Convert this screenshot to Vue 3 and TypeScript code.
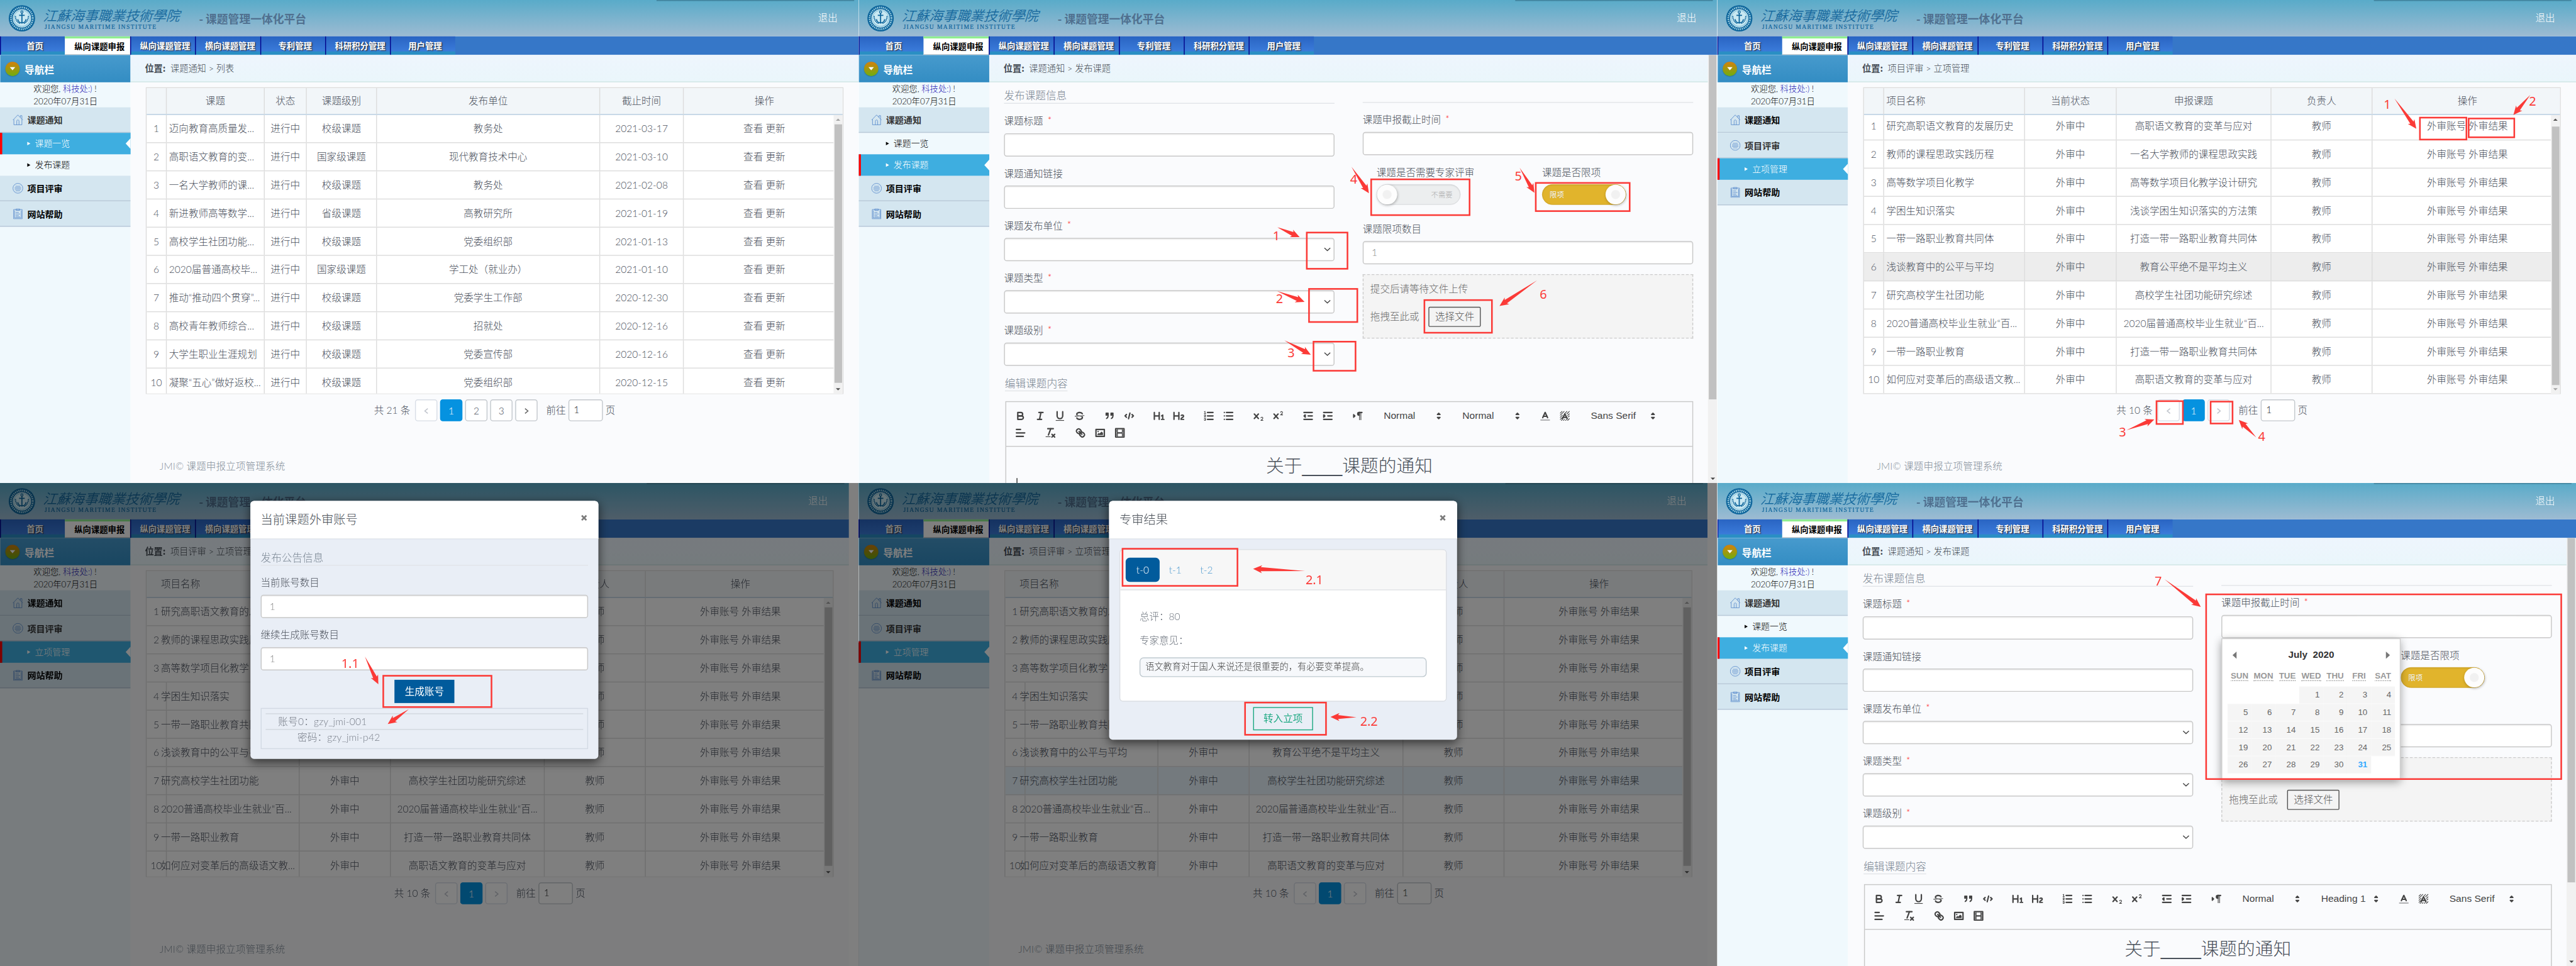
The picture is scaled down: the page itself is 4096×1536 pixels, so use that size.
<script setup lang="ts">
interface Column { title: string; width: number; left?: boolean }
interface Box { x: number; y: number; w: number; h: number }
interface Arrow { x1: number; y1: number; x2: number; y2: number }
interface Note { text: string; x: number; y: number }
interface Screen {
  id: string
  kind: 'list' | 'form'
  group: 'notice' | 'review'
  item: number
  crumbs: string
  modal?: 'account' | 'result'
  calendar?: boolean
  caret?: boolean
  heading?: string
  columns?: Column[]
  rows?: string[][]
  highlight?: number
  scrolled?: boolean
  tight?: boolean
  total?: number
  pages?: number
  boxes: Box[]
  arrows: Arrow[]
  notes: Note[]
}

const tabs = ['首页', '纵向课题申报', '纵向课题管理', '横向课题管理', '专利管理', '科研积分管理', '用户管理']

const noticeCols: Column[] = [
  { title: '', width: 45 },
  { title: '课题', width: 219, left: true },
  { title: '状态', width: 94 },
  { title: '课题级别', width: 157 },
  { title: '发布单位', width: 499 },
  { title: '截止时间', width: 187 },
  { title: '操作', width: 0 },
]
const noticeRows: string[][] = [
  ['迈向教育高质量发...', '进行中', '校级课题', '教务处', '2021-03-17'],
  ['高职语文教育的变...', '进行中', '国家级课题', '现代教育技术中心', '2021-03-10'],
  ['一名大学教师的课...', '进行中', '校级课题', '教务处', '2021-02-08'],
  ['新进教师高等数学...', '进行中', '省级课题', '高教研究所', '2021-01-19'],
  ['高校学生社团功能...', '进行中', '校级课题', '党委组织部', '2021-01-13'],
  ['2020届普通高校毕...', '进行中', '国家级课题', '学工处（就业办）', '2021-01-10'],
  ['推动“推动四个贯穿”...', '进行中', '校级课题', '党委学生工作部', '2020-12-30'],
  ['高校青年教师综合...', '进行中', '校级课题', '招就处', '2020-12-16'],
  ['大学生职业生涯规划', '进行中', '校级课题', '党委宣传部', '2020-12-16'],
  ['凝聚“五心”做好返校...', '进行中', '校级课题', '党委组织部', '2020-12-15'],
].map((r, i) => [String(i + 1), ...r, '查看 更新'])

function reviewCols(b: number, c: number, d: number, e: number): Column[] {
  return [
    { title: '', width: 45 },
    { title: '项目名称', width: b, left: true },
    { title: '当前状态', width: c },
    { title: '申报课题', width: d },
    { title: '负责人', width: e },
    { title: '操作', width: 0 },
  ]
}
const reviewPairs: [string, string][] = [
  ['研究高职语文教育的发展历史', '高职语文教育的变革与应对'],
  ['教师的课程思政实践历程', '一名大学教师的课程思政实践'],
  ['高等数学项目化教学', '高等数学项目化教学设计研究'],
  ['学困生知识落实', '浅谈学困生知识落实的方法策'],
  ['一带一路职业教育共同体', '打造一带一路职业教育共同体'],
  ['浅谈教育中的公平与平均', '教育公平绝不是平均主义'],
  ['研究高校学生社团功能', '高校学生社团功能研究综述'],
  ['2020普通高校毕业生就业“百...', '2020届普通高校毕业生就业“百...'],
  ['一带一路职业教育', '打造一带一路职业教育共同体'],
  ['如何应对变革后的高级语文教...', '高职语文教育的变革与应对'],
]
function reviewRows(last?: string): string[][] {
  return reviewPairs.map(([a, b], i) => [
    String(i + 1), last && i === 9 ? last : a, '外审中', b, '教师', '外审账号 外审结果',
  ])
}

const screens: Screen[] = [
  {
    id: 'notice-list', kind: 'list', group: 'notice', item: 0, crumbs: '课题通知 > 列表',
    columns: noticeCols, rows: noticeRows, total: 21, pages: 3, boxes: [], arrows: [], notes: [],
  },
  {
    id: 'notice-form', kind: 'form', group: 'notice', item: 1, crumbs: '课题通知 > 发布课题', heading: 'Normal', caret: true,
    boxes: [
      { x: 1002, y: 520, w: 91, h: 81 }, { x: 1007, y: 646, w: 108, h: 74 }, { x: 1017, y: 764, w: 94, h: 65 },
      { x: 1146, y: 401, w: 220, h: 80 }, { x: 1514, y: 409, w: 210, h: 63 }, { x: 1265, y: 671, w: 151, h: 73 },
    ],
    arrows: [
      { x1: 936, y1: 508, x2: 986, y2: 530 }, { x1: 936, y1: 651, x2: 997, y2: 675 }, { x1: 952, y1: 761, x2: 1011, y2: 793 },
      { x1: 1102, y1: 373, x2: 1141, y2: 432 }, { x1: 1478, y1: 375, x2: 1511, y2: 431 }, { x1: 1517, y1: 627, x2: 1433, y2: 684 },
    ],
    notes: [
      { text: '1', x: 934, y: 527 }, { text: '2', x: 941, y: 668 }, { text: '3', x: 967, y: 789 },
      { text: '4', x: 1107, y: 400 }, { text: '5', x: 1475, y: 393 }, { text: '6', x: 1531, y: 658 },
    ],
  },
  {
    id: 'review-list', kind: 'list', group: 'review', item: 0, crumbs: '项目评审 > 立项管理',
    columns: reviewCols(315, 205, 346, 226), rows: reviewRows(), highlight: 5, scrolled: true, total: 10, pages: 1,
    boxes: [
      { x: 1571, y: 263, w: 104, h: 49 }, { x: 1680, y: 265, w: 102, h: 42 },
      { x: 982, y: 897, w: 59, h: 51 }, { x: 1103, y: 898, w: 49, h: 49 },
    ],
    arrows: [
      { x1: 1514, y1: 220, x2: 1563, y2: 288 }, { x1: 1818, y1: 212, x2: 1780, y2: 257 },
      { x1: 915, y1: 962, x2: 977, y2: 938 }, { x1: 1205, y1: 978, x2: 1166, y2: 939 },
    ],
    notes: [
      { text: '1', x: 1498, y: 233 }, { text: '2', x: 1823, y: 226 },
      { text: '3', x: 906, y: 966 }, { text: '4', x: 1217, y: 976 },
    ],
  },
  {
    id: 'review-account', kind: 'list', group: 'review', item: 0, crumbs: '项目评审 > 立项管理', modal: 'account',
    columns: reviewCols(297, 204, 344, 226), rows: reviewRows(), tight: true, total: 10, pages: 1,
    boxes: [{ x: 857, y: 431, w: 242, h: 70 }],
    arrows: [{ x1: 816, y1: 388, x2: 846, y2: 450 }, { x1: 914, y1: 506, x2: 867, y2: 539 }],
    notes: [{ text: '1.1', x: 783, y: 403 }],
  },
  {
    id: 'review-result', kind: 'list', group: 'review', item: 0, crumbs: '项目评审 > 立项管理', modal: 'result',
    columns: reviewCols(297, 204, 344, 226), rows: reviewRows('如何应对变革后的高级语文教育'), highlight: 6, tight: true, total: 10, pages: 1,
    boxes: [{ x: 590, y: 147, w: 257, h: 83 }, { x: 864, y: 491, w: 181, h: 72 }],
    arrows: [{ x1: 998, y1: 197, x2: 882, y2: 192 }, { x1: 1113, y1: 524, x2: 1055, y2: 523 }],
    notes: [{ text: '2.1', x: 1019, y: 216 }, { text: '2.2', x: 1141, y: 533 }],
  },
  {
    id: 'notice-calendar', kind: 'form', group: 'notice', item: 1, crumbs: '课题通知 > 发布课题', heading: 'Heading 1', calendar: true,
    boxes: [{ x: 1093, y: 249, w: 794, h: 413 }],
    arrows: [{ x1: 1000, y1: 215, x2: 1081, y2: 277 }],
    notes: [{ text: '7', x: 986, y: 219 }],
  },
]

/** Cells that lie wholly behind an open dialog are not painted. */
function behindModal(s: Screen, row: number, col: number): boolean {
  if (!s.modal || (col !== 2 && col !== 3)) return false
  return row < (s.modal === 'account' ? 6 : 5)
}

const menu = [
  { key: 'notice', title: '课题通知', items: ['课题一览', '发布课题'] },
  { key: 'review', title: '项目评审', items: ['立项管理'] },
  { key: 'help', title: '网站帮助', items: [] as string[] },
]

const fields = [
  { label: '课题标题', required: true, select: false },
  { label: '课题通知链接', required: false, select: false },
  { label: '课题发布单位', required: true, select: true },
  { label: '课题类型', required: true, select: true },
  { label: '课题级别', required: true, select: true },
]

/** Arrow with a needle-thin tail that widens up to a triangular head. */
function arrowPoints(a: Arrow): string {
  const len = Math.hypot(a.x2 - a.x1, a.y2 - a.y1)
  const ux = (a.x2 - a.x1) / len
  const uy = (a.y2 - a.y1) / len
  const head = 20
  const at = (back: number, side: number) =>
    `${(a.x2 - ux * back - uy * side).toFixed(1)},${(a.y2 - uy * back + ux * side).toFixed(1)}`
  return [`${a.x1},${a.y1}`, at(head - 3, 4.5), at(head, 9), `${a.x2},${a.y2}`, at(head, -9), at(head - 3, -4.5)].join(' ')
}

const ln = (x1: number, y1: number, x2: number, y2: number, c = 'qs') =>
  `<line class="${c}" x1="${x1}" y1="${y1}" x2="${x2}" y2="${y2}"/>`
const ps = (d: string, c = 'qs') => `<path class="${c}" d="${d}"/>`
const rc = (x: number, y: number, w: number, h: number, c = 'qf') =>
  `<rect class="${c}" x="${x}" y="${y}" width="${w}" height="${h}"/>`

const icons: Record<string, string> = {
  bold: ps('M5,4H9.5A2.5,2.5,0,0,1,12,6.5v0A2.5,2.5,0,0,1,9.5,9H5V4Z') + ps('M5,9h5.5A2.5,2.5,0,0,1,13,11.5v0A2.5,2.5,0,0,1,10.5,14H5V9Z'),
  italic: ln(7, 4, 13, 4) + ln(5, 14, 11, 14) + ln(8, 14, 10, 4),
  underline: ps('M5,3V9a4.012,4.012,0,0,0,4,4H9a4.012,4.012,0,0,0,4-4V3') + rc(3, 15, 12, 1),
  strike: ln(15.5, 8.5, 2.5, 9.5, 'qs qt')
    + ps('M9.007,8C6.542,7.791,6,7.519,6,6.5,6,5.792,7.283,5,9,5c1.571,0,2.765.679,2.969,1.309a1,1,0,0,0,1.9-.617C13.356,4.106,11.354,3,9,3,6.2,3,4,4.538,4,6.5a3.2,3.2,0,0,0,.5,1.843Z', 'qf')
    + ps('M8.984,10C11.457,10.208,12,10.479,12,11.5c0,0.708-1.283,1.5-3,1.5-1.571,0-2.765-.679-2.969-1.309a1,1,0,1,0-1.9.617C4.644,13.894,6.646,15,9,15c2.8,0,5-1.538,5-3.5a3.2,3.2,0,0,0-.5-1.843Z', 'qf'),
  quote: rc(4, 5, 3, 3, 'qf qs2') + rc(11, 5, 3, 3, 'qf qs2') + ps('M7,8c0,4.031-3,5-3,5', 'qf qs2') + ps('M14,8c0,4.031-3,5-3,5', 'qf qs2'),
  code: '<polyline class="qs" points="5 7 3 9 5 11"/><polyline class="qs" points="13 7 15 9 13 11"/>' + ln(10, 5, 8, 13),
  h1: ps('M10,4V14a1,1,0,0,1-2,0V10H3v4a1,1,0,0,1-2,0V4A1,1,0,0,1,3,4V8H8V4a1,1,0,0,1,2,0Zm6.06787,9.209H14.98975V7.59863a.54085.54085,0,0,0-.605-.60547h-.62744a1.01119,1.01119,0,0,0-.748.29688L11.645,8.56641a.5435.5435,0,0,0-.022.8584l.28613.30762a.53861.53861,0,0,0,.84717.0332l.09912-.08789a1.2137,1.2137,0,0,0,.2417-.35254h.02246s-.01123.30859-.01123.60547V13.209H12.041a.54085.54085,0,0,0-.605.60547v.43945a.54085.54085,0,0,0,.605.60547h4.02686a.54085.54085,0,0,0,.605-.60547v-.43945A.54085.54085,0,0,0,16.06787,13.209Z', 'qf'),
  h2: ps('M16.73975,13.81445v.43945a.54085.54085,0,0,1-.605.60547H11.855a.58392.58392,0,0,1-.64893-.60547V14.0127c0-2.90527,3.39941-3.42187,3.39941-4.55469a.77675.77675,0,0,0-.84717-.78125,1.17684,1.17684,0,0,0-.83594.38477c-.2749.26367-.561.374-.85791.13184l-.4292-.34082c-.30811-.24219-.38525-.51758-.1543-.81445a2.97155,2.97155,0,0,1,2.45361-1.17676,2.45393,2.45393,0,0,1,2.68408,2.40918c0,2.45312-3.1792,2.92676-3.27832,3.93848h2.79443A.54085.54085,0,0,1,16.73975,13.81445ZM9,3A.99974.99974,0,0,0,8,4V8H3V4A1,1,0,0,0,1,4V14a1,1,0,0,0,2,0V10H8v4a1,1,0,0,0,2,0V4A.99974.99974,0,0,0,9,3Z', 'qf'),
  ol: ln(7, 4, 15, 4) + ln(7, 9, 15, 9) + ln(7, 14, 15, 14) + ln(2.5, 5.5, 4.5, 5.5, 'qs qt')
    + ps('M3.5,6A0.5,0.5,0,0,1,3,5.5V3.085l-0.276.138A0.5,0.5,0,0,1,2.053,3c-0.124-.247-0.023-0.324.224-0.447l1-.5A0.5,0.5,0,0,1,4,2.5v3A0.5,0.5,0,0,1,3.5,6Z', 'qf')
    + ps('M4.5,10.5h-2c0-.234,1.85-1.076,1.85-2.234A0.959,0.959,0,0,0,2.5,8.156', 'qs qt')
    + ps('M2.5,14.846a0.959,0.959,0,0,0,1.85-.109A0.7,0.7,0,0,0,3.75,14a0.688,0.688,0,0,0,.6-0.736,0.959,0.959,0,0,0-1.85-.109', 'qs qt'),
  ul: ln(6, 4, 15, 4) + ln(6, 9, 15, 9) + ln(6, 14, 15, 14) + ln(3, 4, 3, 4) + ln(3, 9, 3, 9) + ln(3, 14, 3, 14),
  sub: ps('M15.5,15H13.861a3.858,3.858,0,0,0,1.914-2.975,1.8,1.8,0,0,0-1.6-1.751A1.921,1.921,0,0,0,12.021,11.7a0.50013,0.50013,0,1,0,.957.291h0a0.914,0.914,0,0,1,1.053-.725,0.81,0.81,0,0,1,.744.762c0,1.076-1.16971,1.86982-1.93971,2.43082A1.45639,1.45639,0,0,0,12,15.5a0.5,0.5,0,0,0,.5.5h3A0.5,0.5,0,0,0,15.5,15Z', 'qf') + '<path class="qx" d="M3 6.3 8.9 12.7M8.9 6.3 3 12.7"/>',
  sup: ps('M15.5,7H13.861a4.015,4.015,0,0,0,1.914-2.975,1.8,1.8,0,0,0-1.6-1.751A1.922,1.922,0,0,0,12.021,3.7a0.5,0.5,0,1,0,.957.291,0.917,0.917,0,0,1,1.053-.725,0.81,0.81,0,0,1,.744.762c0,1.077-1.164,1.925-1.934,2.486A1.423,1.423,0,0,0,12,7.5a0.5,0.5,0,0,0,.5.5h3A0.5,0.5,0,0,0,15.5,7Z', 'qf') + '<path class="qx" d="M3 6.3 8.9 12.7M8.9 6.3 3 12.7"/>',
  outdent: ln(3, 14, 15, 14) + ln(3, 4, 15, 4) + ln(9, 9, 15, 9) + '<polyline class="qf qs2" points="5 7 5 11 3 9 5 7"/>',
  indent: ln(3, 14, 15, 14) + ln(3, 4, 15, 4) + ln(9, 9, 15, 9) + '<polyline class="qf qs2" points="3 7 3 11 5 9 3 7"/>',
  dir: '<polygon class="qf qs2" points="3 11 5 9 3 7 3 11"/>' + ln(15, 4, 11, 4) + ps('M11,3a3,3,0,0,0,0,6h1V3H11Z', 'qf') + rc(11, 4, 1, 11) + rc(13, 4, 1, 11),
  color: '<line class="qs ql" x1="3" y1="15" x2="15" y2="15"/><polyline class="qs" points="5.5 11.5 9 4 12.5 11.5"/>' + ln(11.6, 9.6, 6.4, 9.6),
  bg: '<path class="qs qt" d="M2.5 5 5 2.5M2.5 8 8 2.5M2.5 11 5.5 8M12 2.5 9.5 5M2.5 14 5 11.5M15.5 2.5 12 6M4 15.500 6 13.500M15.500 6 13 8.500M7 15.500 8.500 14M15.500 9 14 10.500M10 15.500 11.500 14M13 15.500 15.500 13"/><polyline class="qs" points="5.5 13 9 6 12.5 13"/>' + ln(11.6, 11, 6.4, 11),
  align: ln(3, 9, 15, 9) + ln(3, 14, 13, 14) + ln(3, 4, 9, 4),
  clean: ln(5, 3, 13, 3) + ln(6, 12, 9.35, 3) + ln(11, 11, 15, 15) + ln(15, 11, 11, 15) + rc(2, 14, 7, 1),
  link: ln(7, 7, 11, 11) + ps('M8.9,4.577a3.476,3.476,0,0,1,.36,4.679A3.476,3.476,0,0,1,4.577,8.9C3.185,7.5,2.035,6.4,4.217,4.217S7.5,3.185,8.9,4.577Z')
    + ps('M13.423,9.1a3.476,3.476,0,0,0-4.679-.36,3.476,3.476,0,0,0,.36,4.679c1.392,1.392,2.5,2.542,4.679.36S14.815,10.5,13.423,9.1Z'),
  image: rc(3, 4, 12, 10, 'qs') + '<circle class="qf" cx="6" cy="7" r="1"/><polyline class="qf" points="5 12 5 11 7 9 8 10 11 7 13 9 13 12 5 12"/>',
  video: rc(3, 3, 12, 12, 'qs') + rc(5, 3, 1, 12) + rc(12, 3, 1, 12) + rc(5, 8, 8, 2) + rc(3, 5, 3, 1) + rc(3, 7, 3, 1) + rc(3, 10, 3, 1)
    + rc(3, 12, 3, 1) + rc(12, 5, 3, 1) + rc(12, 7, 3, 1) + rc(12, 10, 3, 1) + rc(12, 12, 3, 1),
  pick: '<polygon class="qf qs2" points="7 11 9 13 11 11 7 11"/><polygon class="qf qs2" points="7 7 9 5 11 7 7 7"/>',
}

const groupsA = [['bold', 'italic', 'underline', 'strike'], ['quote', 'code'], ['h1', 'h2'], ['ol', 'ul'], ['sub', 'sup'], ['outdent', 'indent'], ['dir']]
const groupsB = [['align'], ['clean'], ['link', 'image', 'video']]

const weekdays = ['SUN', 'MON', 'TUE', 'WED', 'THU', 'FRI', 'SAT']
const weeks: (number | null)[][] = Array.from({ length: 5 }, (_, w) =>
  Array.from({ length: 7 }, (_, d) => {
    const n = w * 7 + d - 2
    return n >= 1 && n <= 31 ? n : null
  }))
</script>

<template>
  <div class="viewport">
    <div class="board">
      <section v-for="s in screens" :key="s.id" class="screen">
        <div class="page" :class="{ narrow: s.modal }">
          <header class="top">
            <svg class="emblem" viewBox="0 0 58 58">
              <circle cx="29" cy="29" r="28.500" fill="#0c649b" />
              <circle cx="29" cy="29" r="23.500" fill="none" stroke="#9fd0e2" stroke-width="4" stroke-dasharray="2.200 1.900" />
              <circle cx="29" cy="29" r="19" fill="#8cc6dc" stroke="#d5edf5" stroke-width="1.500" />
              <circle cx="29" cy="29" r="16.500" fill="#c9e8f2" />
              <path d="M15 24c0 8 4 14 10 16M43 24c0 8-4 14-10 16" fill="none" stroke="#0c649b" stroke-width="2.500" stroke-dasharray="2.500 1" />
              <path d="M29 18v21M23 22.500h12M20 31c1 5 5 8 9 8s8-3 9-8" fill="none" stroke="#0c649b" stroke-width="2.400" />
              <circle cx="29" cy="15.500" r="2.400" fill="none" stroke="#0c649b" stroke-width="1.700" />
            </svg>
            <div class="school">
              <span class="school-cn">江蘇海事職業技術學院</span>
              <span class="school-en">JIANGSU MARITIME INSTITUTE</span>
            </div>
            <h1 class="platform">- 课题管理一体化平台</h1>
            <a class="logout">退出</a>
            <i class="top-shade"></i>
          </header>
          <nav class="tabs">
            <a v-for="(t, i) in tabs" :key="t" class="tab" :class="{ on: i === 1, behind: s.modal && i > 3 }"><span>{{ t }}</span></a>
          </nav>
          <div class="body">
            <aside class="side">
              <div class="side-head">
                <span class="badge"><i></i></span><b>导航栏</b>
              </div>
              <div class="hello">
                <p>欢迎您, <a>科技处:)</a>&nbsp;!</p>
                <p class="date">2020年07月31日</p>
              </div>
              <template v-for="m in menu" :key="m.key">
                <div class="group" :class="{ open: m.key === s.group }">
                  <svg viewBox="0 0 24 24" class="gicon">
                    <g v-if="m.key === 'notice'">
                      <path d="M1 12.500 12 1l11 11.500M3 11v12h18V11M9.500 23v-8.500c0-3 5-3 5 0V23" /><path d="M17.500 6.500V2.500h3.500v7.500" />
                    </g>
                    <g v-else-if="m.key === 'review'">
                      <circle cx="12" cy="12" r="11" /><path d="M6.500 7.500h11M5 11h14M5 14h14M7 17.500h10" />
                    </g>
                    <g v-else>
                      <path d="M2.500 2.500h19v21h-19zM4.500 4.500v17h15v-17" /><path d="M8 1h8v3.500H8zM7 9h7M7 12.500h10M7 16h7M7 19h10" />
                    </g>
                  </svg>
                  {{ m.title }}
                </div>
                <template v-if="m.key === s.group">
                  <div v-for="(it, k) in m.items" :key="it" class="item" :class="{ on: k === s.item }">
                    <i class="tri"></i>{{ it }}
                  </div>
                </template>
              </template>
            </aside>

            <main class="main">
              <div class="crumbs"><b>位置:</b><span>{{ s.crumbs }}</span></div>

              <template v-if="s.kind === 'list'">
                <div class="table" :class="{ tight: s.tight, scrolled: s.scrolled }">
                  <div class="thead">
                    <div v-for="(c, i) in s.columns" :key="i" class="cell" :class="{ last: !c.width, left: c.left && s.group === 'review', behind: behindModal(s, -1, i) }" :style="c.width ? { width: c.width + 'px' } : {}">
                      <span>{{ c.title }}</span>
                    </div>
                  </div>
                  <div class="tbody">
                    <div class="rows">
                      <div v-for="(r, ri) in s.rows" :key="ri" class="row" :class="{ hot: ri === s.highlight, merged: s.tight && ri < 3, blue: s.tight }">
                        <div v-for="(v, i) in r" :key="i" class="cell" :class="{ last: !s.columns![i].width, left: s.columns![i].left, behind: behindModal(s, ri, i) }" :style="s.columns![i].width ? { width: s.columns![i].width + 'px' } : {}">
                          <span>{{ v }}</span>
                        </div>
                      </div>
                    </div>
                    <div class="bar"><i class="up"></i><i class="thumb"></i><i class="down"></i></div>
                  </div>
                </div>
                <div class="pager">
                  <span class="total">共 {{ s.total }} 条</span>
                  <span class="pg off"><svg viewBox="0 0 12 16"><path d="M9.500 2.500 3 8l6.500 5.500" /></svg></span>
                  <span v-for="p in s.pages" :key="p" class="pg" :class="{ cur: p === 1 }">{{ p }}</span>
                  <span class="pg" :class="{ off: s.pages === 1 }"><svg viewBox="0 0 12 16"><path d="M3 2.500 9.500 8 3 13.500" /></svg></span>
                  <span class="goto">前往</span><span class="jump">1</span><span>页</span>
                </div>
                <footer class="foot">JMI© 课题申报立项管理系统</footer>
              </template>

              <div v-else class="form">
                <div class="cols">
                  <div class="fl">
                    <h2 class="legend">发布课题信息</h2>
                    <div v-for="f in fields" :key="f.label" class="field">
                      <label>{{ f.label }}<em v-if="f.required">*</em></label>
                      <div class="input">
                        <svg v-if="f.select" class="chev" viewBox="0 0 16 10"><path d="M1.500 1.500 8 7.500l6.500-6" /></svg>
                      </div>
                    </div>
                  </div>
                  <div class="fr">
                    <div class="rule"></div>
                    <div class="field first"><label>课题申报截止时间<em>*</em></label><div class="input"></div></div>
                    <div class="switches">
                      <div class="sw">
                        <template v-if="!s.calendar">
                          <label>课题是否需要专家评审</label><div class="toggle"><i></i><span>不需要</span></div>
                        </template>
                      </div>
                      <div class="sw"><label>课题是否限项</label><div class="toggle yes"><span>限项</span><i></i></div></div>
                    </div>
                    <div class="field quota"><label>{{ s.calendar ? '' : '课题限项数目' }}</label><div class="input">{{ s.calendar ? '' : '1' }}</div></div>
                    <div class="drop">
                      <p>{{ s.calendar ? '' : '提交后请等待文件上传' }}</p>
                      <p>拖拽至此或<span class="pick-file">选择文件</span></p>
                    </div>
                    <div v-if="s.calendar" class="calendar">
                      <div class="cal-head"><i class="prev"></i><b>July&nbsp; 2020</b><i class="next"></i></div>
                      <div class="cal-week"><span v-for="d in weekdays" :key="d"><u>{{ d }}</u></span></div>
                      <div v-for="(w, i) in weeks" :key="i" class="cal-row">
                        <span v-for="(d, k) in w" :key="k" :class="{ day: d, today: d === 31 }">{{ d }}</span>
                      </div>
                    </div>
                  </div>
                </div>
                <h2 class="legend sub">编辑课题内容</h2>
                <div class="editor">
                  <div class="toolbar">
                    <div class="trow">
                      <span v-for="(g, i) in groupsA" :key="i" class="grp">
                        <svg v-for="k in g" :key="k" viewBox="0 0 18 18" v-html="icons[k]"></svg>
                      </span>
                      <span class="picker">Normal<svg viewBox="0 0 18 18" v-html="icons.pick"></svg></span>
                      <span class="picker">{{ s.heading }}<svg viewBox="0 0 18 18" v-html="icons.pick"></svg></span>
                      <span class="grp">
                        <svg viewBox="0 0 18 18" v-html="icons.color"></svg><svg viewBox="0 0 18 18" v-html="icons.bg"></svg>
                      </span>
                      <span class="picker wide">Sans Serif<svg viewBox="0 0 18 18" v-html="icons.pick"></svg></span>
                    </div>
                    <div class="trow">
                      <span v-for="(g, i) in groupsB" :key="i" class="grp">
                        <svg v-for="k in g" :key="k" viewBox="0 0 18 18" v-html="icons[k]"></svg>
                      </span>
                    </div>
                  </div>
                  <div class="doc">关于____课题的通知<i v-if="s.caret" class="cursor"></i></div>
                </div>
              </div>
            </main>
            <div v-if="s.kind === 'form'" class="bar page-bar"><i class="thumb"></i><i class="down"></i></div>
          </div>
        </div>

        <div v-if="s.modal" class="mask">
          <div class="modal">
            <div class="mhead">
              <span>{{ s.modal === 'account' ? '当前课题外审账号' : '专审结果' }}</span>
              <svg viewBox="0 0 14 14"><path d="M2.500 2.500l9 9M11.500 2.500l-9 9" /></svg>
            </div>
            <div v-if="s.modal === 'account'" class="mbody">
              <h2 class="legend">发布公告信息</h2>
              <div class="field"><label>当前账号数目</label><div class="input">1</div></div>
              <div class="field"><label>继续生成账号数目</label><div class="input">1</div></div>
              <span class="solid">生成账号</span>
              <div class="creds">
                <p>账号0：gzy_jmi-001</p>
                <p class="pw">密码：gzy_jmi-p42</p>
              </div>
            </div>
            <div v-else class="mbody result">
              <div class="card">
                <div class="pills"><span class="on">t-0</span><span>t-1</span><span>t-2</span></div>
                <div class="opinion">
                  <p>总评：80</p>
                  <p>专家意见：</p>
                  <div class="comment">语文教育对于国人来说还是很重要的，有必要变革提高。</div>
                </div>
              </div>
              <span class="outline">转入立项</span>
            </div>
          </div>
        </div>

        <svg class="marks" viewBox="0 0 1920 1080">
          <rect v-for="(b, i) in s.boxes" :key="'b' + i" :x="b.x" :y="b.y" :width="b.w" :height="b.h" />
          <polygon v-for="(a, i) in s.arrows" :key="'a' + i" :points="arrowPoints(a)" />
          <text v-for="(n, i) in s.notes" :key="'n' + i" :x="n.x" :y="n.y + 10">{{ n.text }}</text>
        </svg>
      </section>
    </div>
  </div>
</template>

<style>
body { margin: 0; background: #fff; }
.qs { fill: none; stroke: #444; stroke-width: 2; stroke-linecap: round; stroke-linejoin: round; }
.qt { stroke-width: 1; }
.ql { stroke: #b5b5b8; }
.qf { fill: #444; }
.qs2 { stroke: #444; stroke-width: 1.6; stroke-linejoin: round; }
.qx { fill: none; stroke: #444; stroke-width: 2; stroke-linecap: round; }
</style>

<style scoped>
.viewport { width: 4096px; height: 1536px; overflow: hidden; }
.board {
  width: 5760px; height: 2160px; display: grid; grid-template-columns: repeat(3, 1920px); grid-template-rows: repeat(2, 1080px);
  transform: scale(0.711111); transform-origin: 0 0;
  font: 300 21.875px/1.4 Lato, "Noto Sans CJK SC", sans-serif; color: #4c525e;
}
.board * { box-sizing: border-box; }
p, h1, h2 { margin: 0; }
.screen { position: relative; width: 1920px; height: 1080px; overflow: hidden; background: #fff; }
.page { width: 1920px; height: 1080px; display: flex; flex-direction: column; }
.page.narrow { width: 1898px; }
.behind span { visibility: hidden; }

.top { position: relative; height: 81px; flex: none; display: flex; align-items: center; padding-left: 19px; background: linear-gradient(#59abc9, #9dbbd2); }
.top-shade { position: absolute; right: 10px; top: 0; width: 442px; height: 3px; background: linear-gradient(rgba(20, 60, 80, .45), rgba(20, 60, 80, .1)); }
.emblem { width: 60px; height: 60px; }
.school { display: flex; flex-direction: column; width: 310px; margin-left: 18px; color: #12669c; }
.school-cn { font: italic 300 30.5px/38px "Noto Sans CJK TC", sans-serif; white-space: nowrap; transform: skewX(-4deg); -webkit-text-stroke: .4px #12669c; }
.school-en { font: 400 13.5px/15px "Liberation Serif", serif; letter-spacing: 1.95px; white-space: nowrap; padding-left: 3px; -webkit-text-stroke: .3px #12669c; }
.platform { margin-left: 38px; font: 700 25px/32px "Noto Sans CJK SC", sans-serif; color: #50708f; }
.logout { margin-left: auto; margin-right: 47px; color: #fff; font-size: 21.875px; }

.tabs { height: 42px; flex: none; display: flex; background: #3677c8; }
.tab {
  width: 145.4px; height: 42px; display: flex; align-items: center; justify-content: center; padding-left: 9px;
  border-left: 2px solid #00008b; background: linear-gradient(#2964c2, #3a7ad9 78%, #2a8fc4 84%, #2a8fc4);
  color: #fff; font: 700 18.75px/1 "Noto Sans CJK SC", sans-serif; text-shadow: 2px 2px 2px #333; white-space: nowrap; padding-bottom: 1px;
}
.tab.on { background: #fff; color: #000; border-left: 0; border-top: 5px solid #90ee90; border-bottom: 2px solid #c9c9c9; text-shadow: none; padding-bottom: 0; }

.body { flex: 1; display: flex; min-height: 0; }
.side { width: 292px; flex: none; background: #f0f9fd; }
.side-head { height: 61px; display: flex; align-items: center; padding-left: 11px; border-left: 1px solid #6fb1d8; background: linear-gradient(#479acd, #338dc3); color: #fff; }
.side-head b { margin-left: 11px; font: 700 22px/1 "Noto Sans CJK SC", sans-serif; }
.badge { width: 32px; height: 32px; border-radius: 50%; background: linear-gradient(#d5800c, #6fae10); display: flex; align-items: center; justify-content: center; box-shadow: 0 1px 2px rgba(0, 0, 0, .35); }
.badge i { border: 6px solid transparent; border-top: 7px solid #fff; border-bottom: 0; }
.hello { height: 56px; padding-left: 75px; color: #000; font-size: 18.75px; line-height: 27px; padding-top: 1px; white-space: nowrap; }
.hello a { color: #2a1bb5; }
.group { height: 57px; display: flex; align-items: center; padding-left: 28px; background: #d4e6f0; border-bottom: 2px solid #b9c9d8; color: #000; font: 700 19.8px/1 "Noto Sans CJK SC", sans-serif; }
.group.open { color: #333; }
.gicon { width: 24px; height: 24px; margin-right: 9px; fill: none; stroke: #5b8ccc; stroke-width: 1.2; }
.item { position: relative; height: 48px; display: flex; align-items: center; padding-left: 61px; color: #000; font-size: 19.6px; }
.tri { border: 4px solid transparent; border-left: 7px solid #000; border-right: 0; margin-right: 10px; }
.item.on { background: #3eaee0; border-left: 5px solid #f00; padding-left: 56px; color: #fff; }
.item.on .tri { border-left-color: #fff; }
.item.on::after { content: ""; position: absolute; right: 0; top: 12px; border: 12px solid transparent; border-right: 11px solid #fff; border-left: 0; }

.main { flex: 1; min-width: 0; display: flex; flex-direction: column; background: #fafbfd; }
.crumbs { height: 61px; flex: none; display: flex; align-items: center; padding-left: 32px; background: linear-gradient(#eef5fd, #eaf6fb); border-bottom: 2px solid #cbe4e4; font-size: 20px; color: #454c55; }
.crumbs b { width: 57px; font-family: "Noto Sans CJK SC", sans-serif; font-weight: 700; }

.table { height: 686px; margin: 11px 34px 0; border: 2px solid #dcdcdc; border-bottom-width: 1px; display: flex; flex-direction: column; background: #fff; flex: none; }
.thead { display: flex; height: 60px; flex: none; background: #f2f6f9; border-bottom: 2px solid #b7cde0; }
.cell { display: flex; align-items: center; justify-content: center; border-right: 2px solid #dcdcdc; flex: none; white-space: nowrap; padding-top: 1px; }
.cell.last { flex: 1; border-right: 0; padding-left: 5px; }
.cell.left { justify-content: flex-start; padding-left: 5px; }
.tbody { flex: 1; min-height: 0; display: flex; overflow: hidden; }
.rows { flex: 1; }
.row { height: 63px; display: flex; border-bottom: 2px solid #dcdcdc; }
.row .cell.last { padding-left: 25px; }
.scrolled .rows { margin-top: -6px; }
.row.hot { background: #ededed; }
.row.hot.blue { background: #e9f4fc; }
.tight .left span { margin-left: -18px; }
.tight .thead .cell:first-child, .row.merged .cell:first-child { border-right-color: transparent; }
.bar { width: 20px; flex: none; background: #f1f1f1; display: flex; flex-direction: column; align-items: center; padding: 8px 0 7px; }
.bar .up { border: 5px solid transparent; border-bottom: 5px solid #a3a3a3; border-top: 0; }
.bar .down { border: 5px solid transparent; border-top: 5px solid #505050; border-bottom: 0; margin-top: 12px; }
.bar .thumb { width: 17px; flex: 1; background: #c1c1c1; margin-top: 8px; }
.scrolled .up { border-bottom-color: #505050; }
.scrolled .down { border-top-color: #a3a3a3; margin-top: 7px; }
.scrolled .thumb { margin-top: 13px; }

.pager { height: 49px; margin-top: 12px; display: flex; align-items: center; justify-content: center; gap: 6px; flex: none; }
.total { margin-right: 5px; }
.pg { width: 50px; height: 49px; border: 2px solid #c3c8cd; border-radius: 6px; background: #fff; display: flex; align-items: center; justify-content: center; padding-top: 3px; }
.pg.cur { background: #0592e0; border-color: #0592e0; color: #fff; }
.pg svg { width: 12px; height: 16px; fill: none; stroke: #666; stroke-width: 2.2; }
.pg.off { border-color: #d8dde6; }
.pg.off svg { stroke: #c0c4cc; }
.goto { margin-left: 13px; }
.jump { width: 77px; height: 49px; border: 2px solid #c3c8cd; border-radius: 6px; background: #fff; padding: 6px 0 0 10px; color: #222; }
.foot { margin: 85px 0 0 65px; color: #87919c; white-space: nowrap; letter-spacing: .2px; }

.form { padding: 0 33px; display: flex; flex-direction: column; flex: 1; min-height: 0; overflow: hidden; }
.cols { display: flex; justify-content: space-between; height: 648px; flex: none; }
.fl { width: 739px; }
.fr { width: 739px; position: relative; }
.legend { height: 48px; border-bottom: 2px solid #e2e5e9; font-size: 23.4px; font-weight: 300; line-height: 32px; padding-top: 13px; color: #7b8794; }
.field { height: 117px; padding-top: 23px; }
.field label, .sw label { display: block; height: 31px; line-height: 31px; color: #4c525c; }
.field em { font-style: normal; color: #f00; margin-left: 10px; font-size: 21px; position: relative; top: -2px; }
.field .input { margin-top: 12px; height: 52px; border: 2px solid #c8c8c8; border-radius: 6px; background: #fff; box-shadow: inset 0 2px 2px rgba(0, 0, 0, .06); display: flex; align-items: center; padding-left: 18px; color: #888; }
.chev { width: 16px; height: 10px; margin-left: auto; margin-right: 6px; fill: none; stroke: #444; stroke-width: 2; }
.rule { height: 46px; border-bottom: 2px solid #e2e5e9; }
.switches { display: flex; padding-left: 31px; height: 132px; }
.sw { width: 370px; flex: none; padding-top: 23px; }
.sw label { margin-bottom: 11px; white-space: nowrap; }
.toggle { width: 188px; height: 46px; border-radius: 23px; background: #eceeef; border: 1px solid #d2d4d6; box-shadow: inset 0 1px 3px rgba(0, 0, 0, .12); display: flex; align-items: center; justify-content: space-between; font-size: 16px; color: #aaa; }
.toggle i { width: 45px; height: 44px; border-radius: 50%; background: radial-gradient(circle, #f1f1f1 0 9px, #fdfdfd 11px); box-shadow: 1px 2px 6px rgba(0, 0, 0, .3); }
.toggle span { margin-right: 17px; }
.toggle.yes { background: #e1b42c; border-color: #c99d1d; color: #fff; font-weight: 400; }
.toggle.yes span { margin: 0 0 0 16px; text-shadow: 0 1px 1px rgba(0, 0, 0, .25); }
.field.quota { height: 134px; padding-top: 18px; }
.field.quota .input { margin-top: 11px; }
.drop { width: 739px; height: 144px; border: 2px dashed #ccc; background: #f4f4f4; padding: 2px 15px; color: #6a6a6a; }
.drop p { height: 59px; display: flex; align-items: center; }
.drop p + p { height: 64px; }
.pick-file { margin-left: 21px; width: 117px; height: 45px; border: 2px solid #555; border-radius: 3px; display: flex; align-items: center; justify-content: center; color: #555; }
.field.first { height: 117px; padding-top: 22px; }
.field.first .input { margin-top: 12px; }
.legend.sub { align-self: flex-start; margin: 0 0 0 2px; height: 44px; padding-top: 9px; }
.editor { margin: 22px 0 0 3px; height: 260px; border: 2px solid #c8c8c8; flex: none; }
.toolbar { height: 100px; border-bottom: 2px solid #c8c8c8; padding: 12px 0 0 10px; }
.trow { height: 38px; display: flex; align-items: center; }
.grp { display: flex; margin-right: 23px; }
.grp svg { width: 28px; height: 28px; margin: 0 8px; flex: none; }
.picker { width: 153px; margin-right: 23px; padding-left: 13px; display: flex; align-items: center; justify-content: space-between; font: 400 21.875px/1 "Liberation Sans", sans-serif; color: #444; padding-right: 3px; white-space: nowrap; }
.picker svg { width: 28px; height: 28px; flex: none; }
.picker.wide { width: 169px; }
.doc { position: relative; padding-top: 17px; text-align: center; font: 300 40.4px/52px "Liberation Sans", "Noto Sans CJK SC", sans-serif; color: #4a515b; }
.cursor { position: absolute; left: 23px; top: 70px; width: 2px; height: 40px; background: #333; }
.page-bar { width: 21px; padding-top: 0; }
.page-bar .thumb { flex: none; height: 770px; margin: 0; }
.page-bar .down { margin-top: auto; border-top-color: #444; }

.calendar { position: absolute; left: 0; top: 163px; width: 401px; height: 317px; border: 2px solid #ccc; background: #fff; box-shadow: 0 6px 19px rgba(0, 0, 0, .4); padding: 11px 11px 0 12px; font: 400 18.75px/1 "Liberation Sans", sans-serif; color: #666; }
.cal-head { height: 50px; display: flex; align-items: center; justify-content: space-between; padding: 0 11px; color: #333; font-size: 21.5px; }
.prev, .next { border: 8px solid transparent; }
.prev { border-right: 9px solid #777; border-left: 0; }
.next { border-left: 9px solid #777; border-right: 0; }
.cal-week { height: 45px; display: flex; align-items: center; }
.cal-week span { flex: 1; text-align: center; font-weight: 700; color: #999; }
.cal-week u { text-decoration: none; border-bottom: 2px dotted #999; line-height: 18px; display: inline-block; }
.cal-row { display: flex; height: 39px; }
.cal-row span { flex: 1; display: flex; align-items: center; justify-content: flex-end; padding-right: 8px; }
.cal-row .day { background: #f5f5f5; border-bottom: 1.5px solid #fff; }
.cal-row .today { color: #3af; font-weight: 700; }

.mask { position: absolute; inset: 0; background: rgba(0, 0, 0, .5); }
.modal { position: absolute; left: 560px; top: 40px; width: 778px; border-radius: 8px; background: #e9eef6; box-shadow: 0 6px 22px rgba(0, 0, 0, .6); }
.mhead { height: 86px; background: #fff; border-bottom: 2px solid #d5dbe3; border-radius: 8px 8px 0 0; display: flex; justify-content: space-between; align-items: center; padding: 0 24px 0 23px; font-size: 27.1px; color: #4a5058; }
.mhead svg { width: 16px; height: 16px; margin-top: -8px; fill: none; stroke: #7b7b7b; stroke-width: 3.4; }
.mbody { height: 491px; padding: 12px 23px 0; }
.mbody .field { padding-top: 22px; height: 117px; }
.mbody .legend { height: 47px; }
.solid, .outline { width: 134px; height: 52px; margin: 21px auto 0; display: flex; align-items: center; justify-content: center; background: #015b9c; color: #fff; font-weight: 400; }
.creds { margin-top: 11px; height: 92px; border: 2px solid #d3dae4; padding: 10px 9px; color: #777d88; white-space: nowrap; }
.creds p { height: 35px; line-height: 34px; border-top: 2px solid #d3d8df; padding-left: 28px; letter-spacing: .35px; }
.creds .pw { padding-left: 71px; }
.mbody.result { height: 448px; padding-top: 22px; }
.card { height: 341px; border: 2px solid #dcdfe4; border-radius: 8px; background: #fff; }
.pills { height: 90px; border-bottom: 2px solid #d8dade; background: #f7f7f7; border-radius: 8px 8px 0 0; display: flex; align-items: center; padding-left: 12px; color: #4f9bd0; }
.pills span { width: 70px; height: 54px; display: flex; align-items: center; justify-content: center; }
.pills .on { width: 76px; border-radius: 9px; background: #015b9c; color: #fff; }
.opinion { padding: 33px 43px; color: #6d747e; }
.opinion p { height: 53px; display: flex; align-items: center; }
.comment { margin-top: 11px; height: 44px; border: 2px solid #bfc9cf; border-radius: 9px; background: #f6f8fb; padding-left: 11px; font: 300 20px/38px "Liberation Serif", "Noto Sans CJK SC", serif; color: #444; white-space: nowrap; }
.outline { margin-top: 12px; background: none; border: 2px solid #1fa983; color: #1fa983; }

.marks { position: absolute; inset: 0; width: 1920px; height: 1080px; overflow: visible; pointer-events: none; }
.marks rect { fill: none; stroke: #fb3a37; stroke-width: 3.6; }
.marks polygon { fill: #fb3a37; }
.marks text { fill: #fb3a37; font: 400 28px "Noto Sans", sans-serif; text-anchor: middle; }
</style>
